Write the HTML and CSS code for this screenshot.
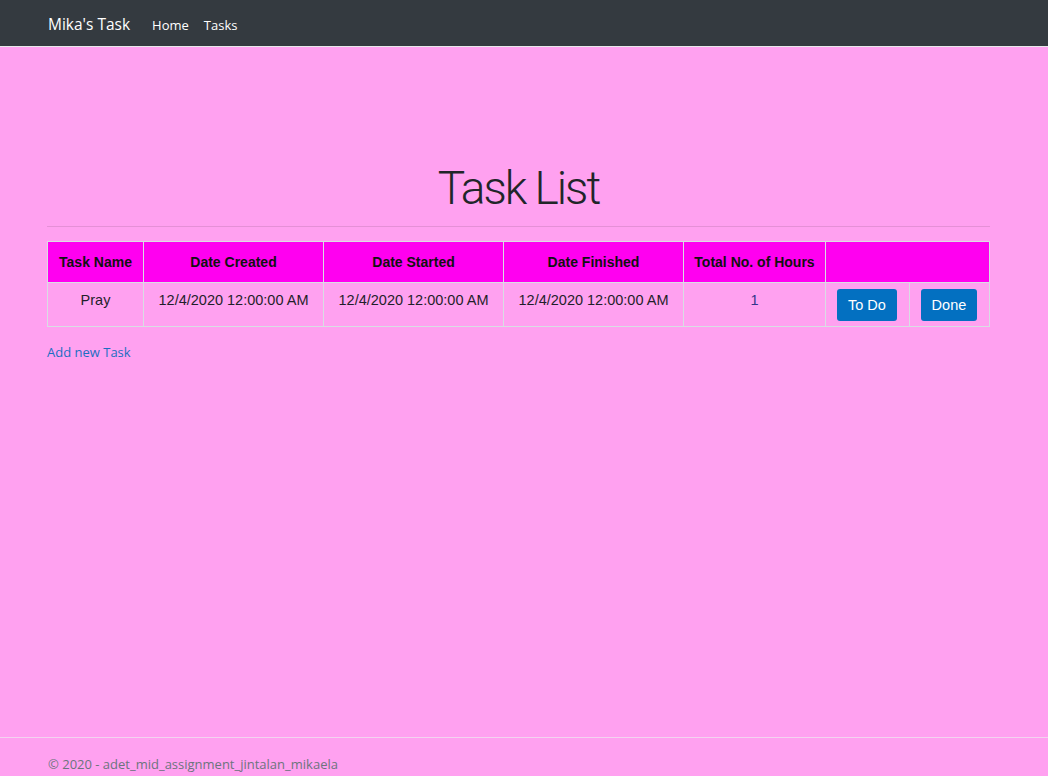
FILE: index.html
```html
<!DOCTYPE html>
<html lang="en">
<head>
<meta charset="utf-8">
<title>Task List - Mika's Task</title>
<link rel="stylesheet" href="styles.css">
</head>
<body>
<header class="navbar">
  <a class="brand" href="#">Mika's Task</a>
  <nav class="nav">
    <a class="nav-link" href="#">Home</a>
    <a class="nav-link" href="#">Tasks</a>
  </nav>
</header>
<main class="main">
  <h1 class="title">Task List</h1>
  <hr class="rule">
  <table class="tasks">
    <thead>
      <tr>
        <th class="c-name">Task Name</th>
        <th class="c-date">Date Created</th>
        <th class="c-date">Date Started</th>
        <th class="c-date">Date Finished</th>
        <th class="c-hours">Total No. of Hours</th>
        <th colspan="2"></th>
      </tr>
    </thead>
    <tbody>
      <tr>
        <td>Pray</td>
        <td>12/4/2020 12:00:00 AM</td>
        <td>12/4/2020 12:00:00 AM</td>
        <td>12/4/2020 12:00:00 AM</td>
        <td class="hours">1</td>
        <td class="btn-cell"><a class="btn" href="#">To Do</a></td>
        <td class="btn-cell"><a class="btn" href="#">Done</a></td>
      </tr>
    </tbody>
  </table>
  <a class="add-link" href="#">Add new Task</a>
</main>
<footer class="footer">© 2020 - adet_mid_assignment_jintalan_mikaela</footer>
</body>
</html>
```
FILE: styles.css
```css
html, body {
  margin: 0;
  padding: 0;
}
body {
  background: #ffa1f0;
  font-family: "Open Sans", "Noto Sans", sans-serif;
  font-size: 14px;
  color: #212529;
  height: 100vh;
  display: flex;
  flex-direction: column;
  box-sizing: border-box;
  overflow: hidden;
}
.navbar {
  height: 46px;
  background: #343a40;
  border-bottom: 1px solid #e8e8ea;
  display: flex;
  align-items: center;
  padding: 0 48px;
  box-sizing: content-box;
  flex-shrink: 0;
}
.brand {
  color: #fff;
  text-decoration: none;
  font-size: 15.5px;
  margin-right: 22px;
  margin-top: 1px;
}
.nav {
  display: flex;
  gap: 15px;
}
.nav-link {
  color: #fff;
  text-decoration: none;
  font-size: 13px;
  margin-top: 3px;
}
.main {
  flex: 1;
  padding: 0 58px 0 47px;
  display: flex;
  flex-direction: column;
}
.title {
  margin: 112px 0 0;
  text-align: center;
  font-family: Roboto, Lato, sans-serif;
  font-weight: 300;
  font-size: 46px;
  letter-spacing: -2px;
  line-height: 58px;
  color: #212529;
}
.rule {
  margin: 9px 0 14px;
  border: 0;
  border-top: 1px solid rgba(0, 0, 0, 0.1);
  width: 100%;
}
.tasks {
  border-collapse: collapse;
  width: 100%;
  font-family: "Liberation Sans", Arial, sans-serif;
  font-size: 14.5px;
  color: #1f1f2a;
}
.tasks th,
.tasks td {
  border: 1px solid #d9dde3;
}
.tasks th {
  background: #ff00f0;
  height: 41px;
  padding: 0 8px;
  font-size: 14px;
  font-weight: 700;
  color: #111;
  vertical-align: middle;
  box-sizing: border-box;
}
.c-name { width: 96px; }
.c-date { width: 180px; }
.c-hours { width: 142px; }
.tasks td {
  text-align: center;
  vertical-align: top;
  padding: 7px 8px;
  line-height: 20px;
}
.tasks td.hours {
  color: #33348a;
}
.tasks td.btn-cell {
  text-align: left;
  padding: 6px 11px 5px;
}
.btn {
  display: inline-block;
  background: #0370c1;
  color: #fff;
  text-decoration: none;
  border-radius: 3px;
  height: 32px;
  line-height: 32px;
  padding: 0 11px;
  font-size: 14.5px;
  box-sizing: border-box;
  vertical-align: top;
}
.add-link {
  align-self: flex-start;
  margin-top: 16px;
  color: #1b6ec2;
  text-decoration: none;
  font-size: 13px;
}
.footer {
  flex-shrink: 0;
  border-top: 1px solid #f3d3ef;
  height: 20px;
  padding: 16px 48px 2px;
  box-sizing: content-box;
  color: #6c757d;
  font-size: 13px;
  line-height: 20px;
}
```
